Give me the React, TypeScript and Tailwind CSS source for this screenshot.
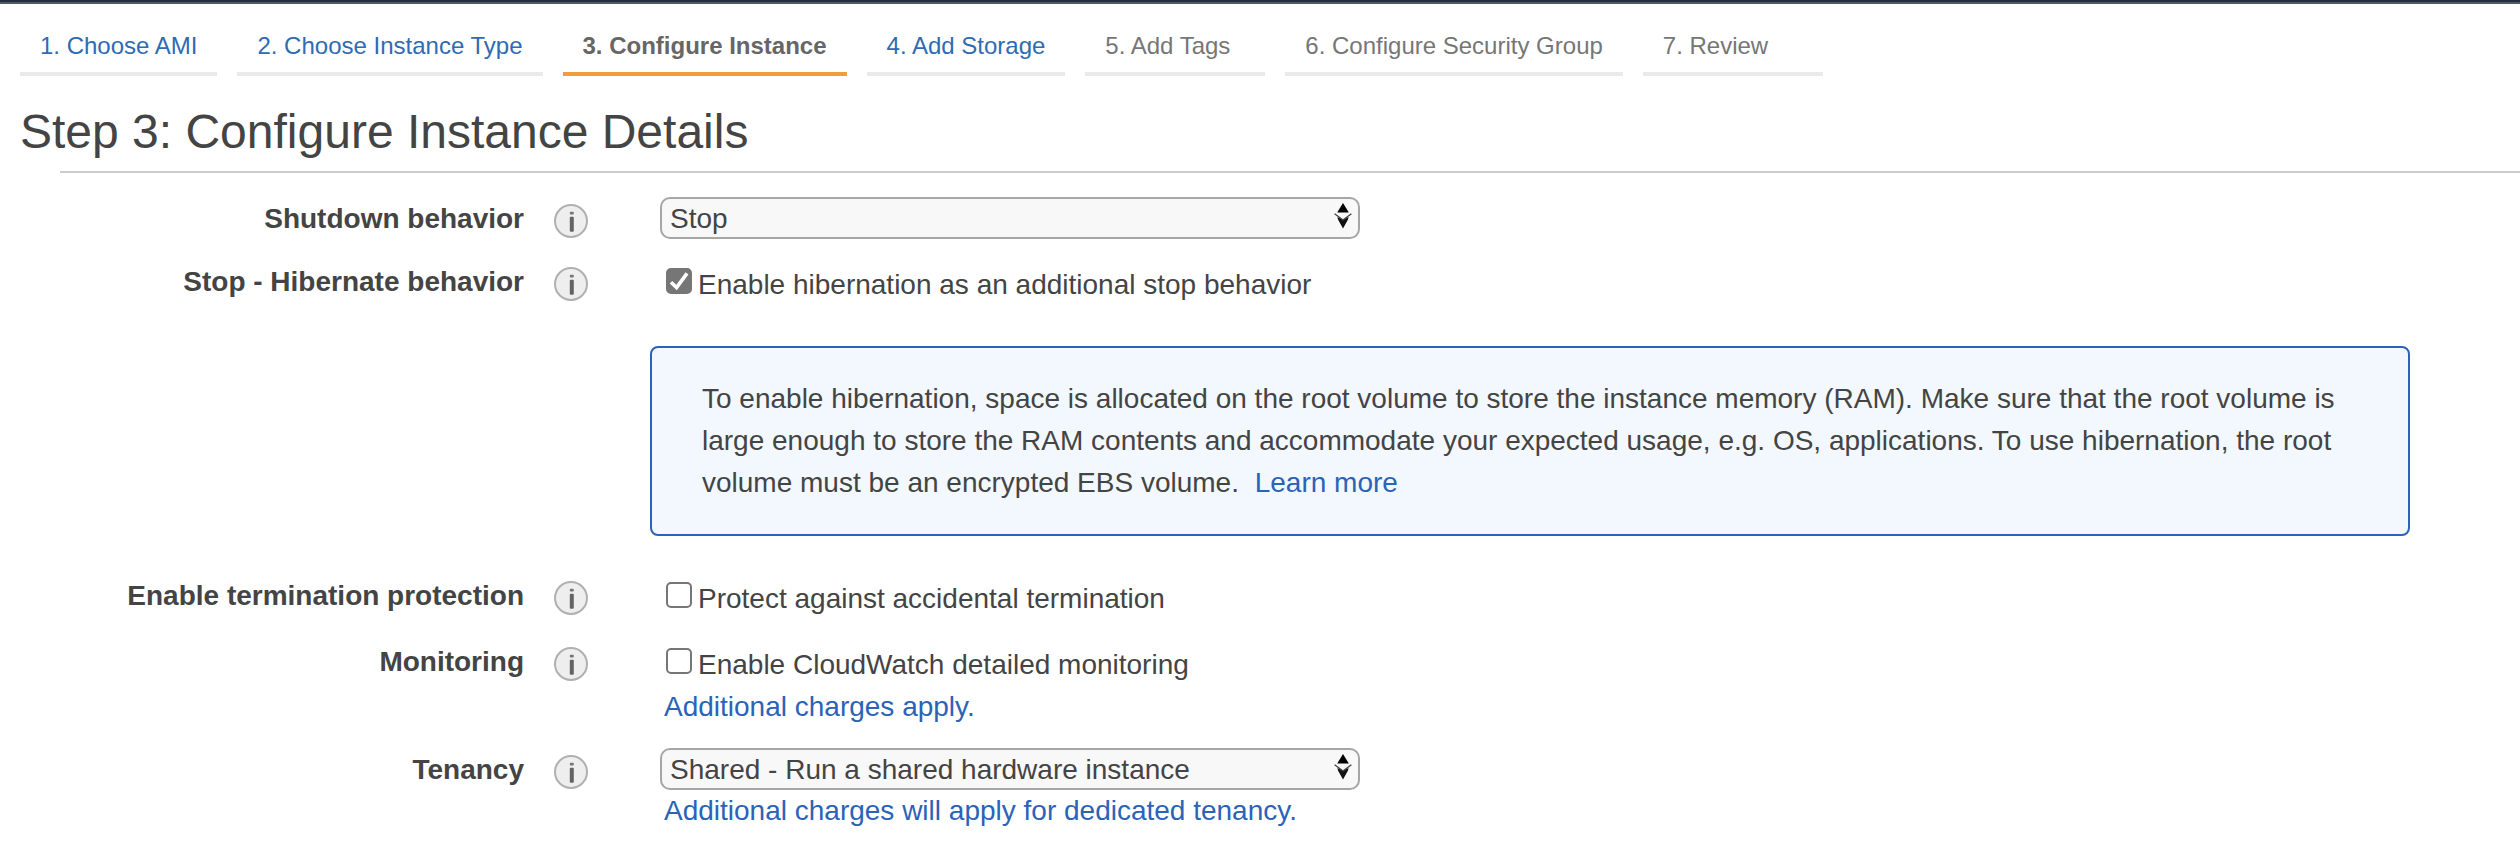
import { useState, type ReactNode } from "react";

type Step = { label: string; state: "link" | "current" | "pending" };

const STEPS: Step[] = [
  { label: "1. Choose AMI", state: "link" },
  { label: "2. Choose Instance Type", state: "link" },
  { label: "3. Configure Instance", state: "current" },
  { label: "4. Add Storage", state: "link" },
  { label: "5. Add Tags", state: "pending" },
  { label: "6. Configure Security Group", state: "pending" },
  { label: "7. Review", state: "pending" },
];

const STEP_STYLES = {
  link: "border-[#eaeaea] text-[#2f6bb3]",
  current: "border-[#f29d38] font-bold text-[#666666]",
  pending: "border-[#eaeaea] text-[#767676]",
};

function StepTabs() {
  return (
    <nav aria-label="Wizard steps" className="px-5 pt-7">
      <ol className="flex flex-wrap gap-5 text-[24px] leading-7">
        {STEPS.map((step) => (
          <li
            key={step.label}
            aria-current={step.state === "current" ? "step" : undefined}
            className={`min-w-[180px] border-b-4 px-5 pb-3 ${STEP_STYLES[step.state]}`}
          >
            {step.state === "link" ? <a href="#">{step.label}</a> : <span>{step.label}</span>}
          </li>
        ))}
      </ol>
    </nav>
  );
}

function InfoButton({ topic }: { topic: string }) {
  return (
    <button type="button" aria-label={`About ${topic}`} className="size-9 shrink-0">
      <svg viewBox="0 0 36 36" className="size-9" aria-hidden="true">
        <circle cx="18" cy="18" r="16" fill="#eeeeee" stroke="#b0b0b0" strokeWidth="2" />
        <rect x="16.8" y="8.7" width="4" height="2.8" rx="1" fill="#777777" />
        <rect x="16.8" y="13.7" width="4" height="15" rx="1" fill="#646464" />
      </svg>
    </button>
  );
}

function Row({ id, label, children }: { id: string; label: string; children: ReactNode }) {
  return (
    <div className="flex min-h-[43px] items-start">
      <label htmlFor={id} className="w-[524px] shrink-0 pt-px text-right font-bold">
        {label}
      </label>
      <div className="flex w-[136px] shrink-0 pt-[6px] pl-[29px]">
        <InfoButton topic={label} />
      </div>
      <div className="min-w-0 flex-1">{children}</div>
    </div>
  );
}

function Select({ id, options }: { id: string; options: string[] }) {
  return (
    <div className="relative h-[42px] w-full max-w-[700px]">
      <select
        id={id}
        className="h-full w-full appearance-none rounded-[10px] border-2 border-[#a6a6a6] bg-[#f8f8f8] pt-0.5 pr-10 pl-2 text-[28px] leading-9"
      >
        {options.map((option) => (
          <option key={option}>{option}</option>
        ))}
      </select>
      <svg
        viewBox="0 0 18 26"
        className="pointer-events-none absolute top-[6px] right-2 h-[26px] w-[18px]"
        aria-hidden="true"
      >
        <path d="M9 0 14.8 9.6H3.2Z" fill="#000000" />
        <path d="M3.4 14 9 16.8 14.6 14 14 16.6 9 25.6 4 16.6Z" fill="#111111" />
        <path d="M.6 10.8 9 17 17.4 10.8" fill="none" stroke="#444444" strokeWidth="1.4" />
      </svg>
    </div>
  );
}

function Checkbox({ id, text, initial = false }: { id: string; text: string; initial?: boolean }) {
  const [checked, setChecked] = useState(initial);
  return (
    <div className="flex items-start gap-[6px] pt-1 pl-[6px]">
      <span className="relative mt-1 flex size-[26px] shrink-0">
        <input
          id={id}
          type="checkbox"
          checked={checked}
          onChange={(event) => setChecked(event.target.checked)}
          className="size-[26px] appearance-none rounded-[5px] border-2 border-[#767676] bg-white checked:bg-[#767676]"
        />
        {checked && (
          <svg
            viewBox="0 0 26 26"
            className="pointer-events-none absolute inset-0 size-[26px]"
            aria-hidden="true"
          >
            <path d="M5 14.2 10.6 19.6 21 5.4" fill="none" stroke="#ffffff" strokeWidth="3.6" />
          </svg>
        )}
      </span>
      <label htmlFor={id}>{text}</label>
    </div>
  );
}

function ChargesLink({ children }: { children: ReactNode }) {
  return (
    <a href="#" className="block pl-1 text-[#2a63b8]">
      {children}
    </a>
  );
}

export default function App() {
  return (
    <div className="min-h-screen bg-white font-['Liberation_Sans',Arial,sans-serif] text-[#444444]">
      <div className="h-1 border-b-2 border-[#545b68] bg-[#232f3e]" />
      <StepTabs />
      <h1 className="mt-7 px-5 text-[48px] leading-[56px]">Step 3: Configure Instance Details</h1>
      <hr className="mt-[11px] ml-[60px] border-t-2 border-[#cccccc]" />

      <form className="mt-6 flex flex-col gap-5 pb-6 text-[28px] leading-[42px]">
        <Row id="shutdown" label="Shutdown behavior">
          <Select id="shutdown" options={["Stop", "Terminate"]} />
        </Row>
        <Row id="hibernate" label="Stop - Hibernate behavior">
          <Checkbox id="hibernate" text="Enable hibernation as an additional stop behavior" initial />
        </Row>
        <div className="pt-5 pr-[110px] pb-[18px] pl-[650px]">
          <p className="rounded-lg border-2 border-[#2a63b8] bg-[#f2f8fd] px-[50px] py-[30px]">
            To enable hibernation, space is allocated on the root volume to store the instance memory (RAM).
            Make sure that the root volume is large enough to store the RAM contents and accommodate your
            expected usage, e.g. OS, applications. To use hibernation, the root volume must be an encrypted
            EBS volume.{" "}
            <a href="#" className="ml-2 text-[#2a63b8]">
              Learn more
            </a>
          </p>
        </div>
        <Row id="termination" label="Enable termination protection">
          <Checkbox id="termination" text="Protect against accidental termination" />
        </Row>
        <Row id="monitoring" label="Monitoring">
          <Checkbox id="monitoring" text="Enable CloudWatch detailed monitoring" />
          <ChargesLink>Additional charges apply.</ChargesLink>
        </Row>
        <Row id="tenancy" label="Tenancy">
          <Select
            id="tenancy"
            options={[
              "Shared - Run a shared hardware instance",
              "Dedicated - Run a Dedicated instance",
              "Dedicated host - Launch this instance on a Dedicated host",
            ]}
          />
          <ChargesLink>Additional charges will apply for dedicated tenancy.</ChargesLink>
        </Row>
      </form>
    </div>
  );
}
